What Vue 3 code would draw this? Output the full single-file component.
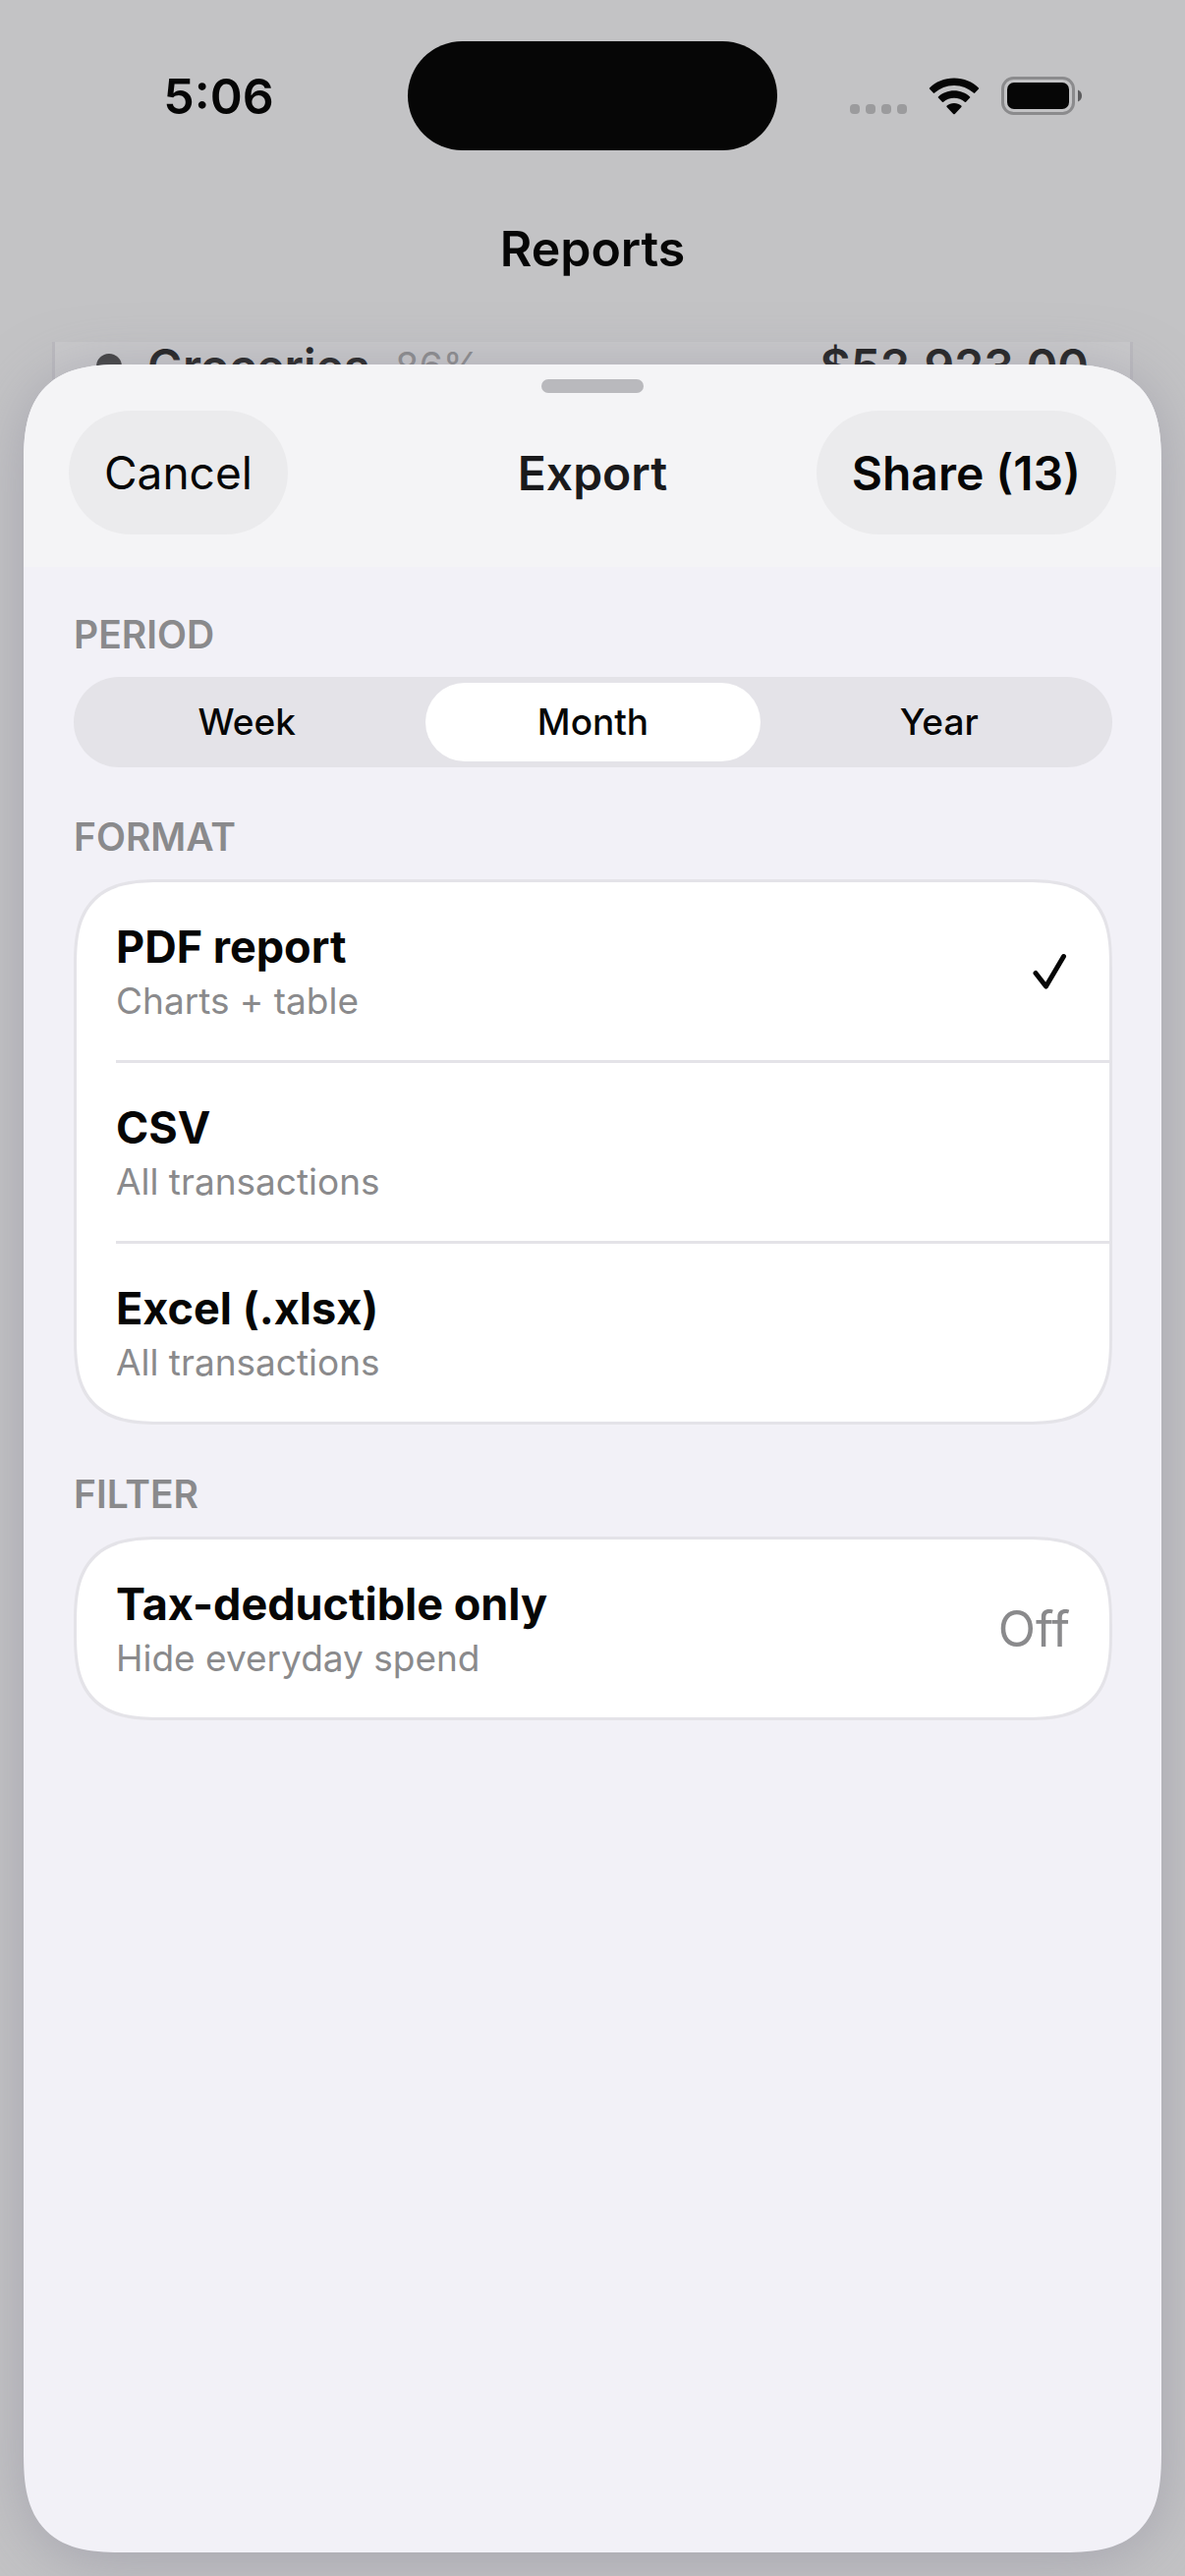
<template>
  <div class="screen">
    <div class="status-bar">
      <span class="time">5:06</span>
      <div class="island"></div>
      <div class="status-icons">
        <svg class="cell" width="58" height="10" viewBox="0 0 58 10">
          <rect v-for="n in 4" :key="n" :x="(n - 1) * 16" width="10" height="10" rx="4" fill="#9b9b9d" />
        </svg>
        <svg width="52" height="38" viewBox="0 0 52 38" fill="#060606">
          <path d="M26 0.5C16 0.5 7.200 4.300 1 10.500Q0.500 11 1 11.600L4.800 15.600Q5.500 16.200 6.200 15.600C11.400 10.800 18.300 7.900 26 7.900S40.600 10.800 45.800 15.600Q46.500 16.200 47.200 15.600L51 11.600Q51.500 11 51 10.500C44.800 4.300 36 0.500 26 0.500Z" />
          <path d="M26 13.200C19.800 13.200 14.100 15.500 9.900 19.400Q9.300 20 9.900 20.600L13.900 24.700Q14.500 25.300 15.200 24.700C18.100 22.200 21.900 20.700 26 20.700S33.900 22.200 36.800 24.700Q37.500 25.300 38.100 24.700L42.100 20.600Q42.700 20 42.100 19.400C37.900 15.500 32.200 13.200 26 13.200Z" />
          <path d="M26 26C23.100 26 20.600 27 18.700 28.600Q18 29.200 18.600 29.900L25.200 36.900Q26 37.700 26.800 36.900L33.400 29.900Q34 29.200 33.300 28.600C31.400 27 28.900 26 26 26Z" />
        </svg>
        <svg width="83" height="40" viewBox="0 0 83 40">
          <rect x="1.5" y="1.500" width="72" height="36" rx="11" fill="none" stroke="#8b8b8d" stroke-width="3" />
          <rect x="6" y="6" width="63" height="27" rx="7" fill="#060606" />
          <path d="M78 13.500C80.500 14.500 82 16.800 82 19.500S80.500 24.500 78 25.500Z" fill="#5c5c5e" />
        </svg>
      </div>
    </div>

    <h1 class="page-title">Reports</h1>

    <div class="report-card">
      <span class="dot"></span>
      <span class="name">Groceries</span>
      <span class="percent">86%</span>
      <span class="amount">$52,923.00</span>
    </div>

    <div class="sheet">
      <header class="sheet-header">
        <div class="grabber"></div>
        <div class="toolbar">
          <button type="button" class="pill">Cancel</button>
          <h2>Export</h2>
          <button type="button" class="pill share">Share ({{ count }})</button>
        </div>
      </header>

      <form class="sheet-body" @submit.prevent>
        <fieldset>
          <legend>PERIOD</legend>
          <div class="segmented">
            <label v-for="p in periods" :key="p" :class="{ active: period === p }">
              <input type="radio" name="period" :value="p" v-model="period">
              {{ p }}
            </label>
          </div>
        </fieldset>

        <fieldset>
          <legend>FORMAT</legend>
          <div class="card">
            <label v-for="f in formats" :key="f.id" class="row">
              <input type="radio" name="format" :value="f.id" v-model="format">
              <span class="row-text">
                <span class="row-title">{{ f.title }}</span>
                <span class="row-sub">{{ f.sub }}</span>
              </span>
              <svg v-if="format === f.id" class="check" width="38" height="38" viewBox="0 0 38 38">
                <path d="M3 20.500L13.500 34L31.500 3.500" fill="none" stroke="#060606" stroke-width="5" stroke-linecap="round" stroke-linejoin="round" />
              </svg>
            </label>
          </div>
        </fieldset>

        <fieldset>
          <legend>FILTER</legend>
          <div class="card">
            <label class="row">
              <input type="checkbox" v-model="taxOnly">
              <span class="row-text">
                <span class="row-title">Tax-deductible only</span>
                <span class="row-sub">Hide everyday spend</span>
              </span>
              <span class="state">{{ taxOnly ? 'On' : 'Off' }}</span>
            </label>
          </div>
        </fieldset>
      </form>
    </div>
  </div>
</template>

<script setup>
import { ref } from 'vue'

const count = ref(13)
const periods = ['Week', 'Month', 'Year']
const period = ref('Month')

const formats = [
  { id: 'pdf', title: 'PDF report', sub: 'Charts + table' },
  { id: 'csv', title: 'CSV', sub: 'All transactions' },
  { id: 'xlsx', title: 'Excel (.xlsx)', sub: 'All transactions' }
]
const format = ref('pdf')
const taxOnly = ref(false)
</script>

<style>
body {
  margin: 0;
  background: #c3c3c5;
}
</style>

<style scoped>
.screen {
  position: relative;
  box-sizing: border-box;
  min-height: 100vh;
  overflow: hidden;
  font-family: Inter, "Liberation Sans", sans-serif;
  color: #060606;
  background: #c3c3c5;
}

/* status bar */
.status-bar {
  display: grid;
  grid-template-columns: 1fr 376px 1fr;
  align-items: center;
  padding-top: 42px;
}

.time {
  padding-left: 30px;
  text-align: center;
  font-size: 50px;
  font-weight: 600;
}

.island {
  height: 111px;
  border-radius: 56px;
  background: #060606;
}

.status-icons {
  display: flex;
  align-items: center;
  gap: 22px;
  padding-left: 74px;
}

.cell {
  margin-top: 26px;
}

.page-title {
  margin: 70px 0 65px;
  text-align: center;
  font-size: 50px;
  line-height: 60px;
  font-weight: 600;
}

.report-card {
  display: flex;
  align-items: center;
  height: 50px;
  margin: 0 53px;
  padding: 0 42px;
  border: solid #bab9be;
  border-width: 0 3px;
  background: #c9c9cb;
  font-size: 48px;
  line-height: 50px;
}

.dot {
  width: 26px;
  height: 26px;
  margin-right: 26px;
  border-radius: 50%;
  background: #3c3c3c;
}

.name,
.amount {
  font-weight: 600;
  color: #1c1c1c;
}

.percent {
  margin-left: 26px;
  font-size: 39px;
  color: #8a8a8c;
}

.amount {
  margin-left: auto;
}

/* export sheet */
.sheet {
  position: absolute;
  top: 371px;
  right: 24px;
  bottom: 24px;
  left: 24px;
  border-radius: 84px;
  background: #f2f1f7;
  box-shadow: 0 8px 60px rgba(140, 138, 155, 0.55);
  overflow: hidden;
}

.sheet-header {
  padding: 15px 46px 33px;
  background: #f4f4f6;
}

.grabber {
  width: 104px;
  height: 14px;
  margin: 0 auto 18px;
  border-radius: 7px;
  background: #b9b9bd;
}

.toolbar {
  display: grid;
  grid-template-columns: 1fr auto 1fr;
  align-items: center;
}

.toolbar h2 {
  margin: 0;
  font-size: 48px;
  font-weight: 600;
  color: #1a1a1c;
}

.pill {
  justify-self: start;
  height: 126px;
  padding: 0 36px;
  border: none;
  border-radius: 63px;
  background: #ebebed;
  font-family: inherit;
  font-size: 46px;
  font-weight: 400;
  color: #060606;
}

.share {
  justify-self: end;
  font-size: 48px;
  font-weight: 600;
}

.sheet-body {
  display: flex;
  flex-direction: column;
  gap: 49px;
  padding: 47px 50px 0 51px;
}

fieldset {
  min-width: 0;
  margin: 0;
  padding: 0;
  border: none;
}

legend {
  margin-bottom: 21px;
  padding: 0;
  font-size: 39px;
  line-height: 44px;
  font-weight: 600;
  color: #8a8a8c;
}

label {
  position: relative;
  cursor: pointer;
}

label input {
  position: absolute;
  inset: 0;
  width: 100%;
  height: 100%;
  margin: 0;
  opacity: 0;
}

.segmented {
  display: grid;
  grid-template-columns: repeat(3, 1fr);
  border-radius: 46px;
  background: #e4e3e8;
}

.segmented label {
  margin: 6px;
  border-radius: 40px;
  text-align: center;
  font-size: 37px;
  line-height: 80px;
  font-weight: 500;
}

.segmented .active {
  background: #fff;
}

.card {
  border: 3px solid #e4e3e8;
  border-radius: 72px;
  background: #fff;
  overflow: hidden;
}

.row {
  display: flex;
  align-items: center;
  justify-content: space-between;
  height: 181px;
  margin-left: 40px;
  padding-right: 40px;
}

.row + .row {
  border-top: 3px solid #e4e3e8;
}

.row-text {
  display: flex;
  flex-direction: column;
}

.row-title {
  font-size: 45px;
  line-height: 60px;
  font-weight: 700;
}

.row-sub {
  font-size: 37px;
  line-height: 50px;
  color: #8a8a8c;
}

.state {
  font-size: 50px;
  color: #8a8a8c;
}

/* smoother corners where the browser can draw them */
@supports (corner-shape: superellipse(1.5)) {
  .sheet {
    border-radius: 104px;
    corner-shape: superellipse(1.5);
  }

  .card {
    border-radius: 90px;
    corner-shape: superellipse(1.5);
  }
}
</style>
